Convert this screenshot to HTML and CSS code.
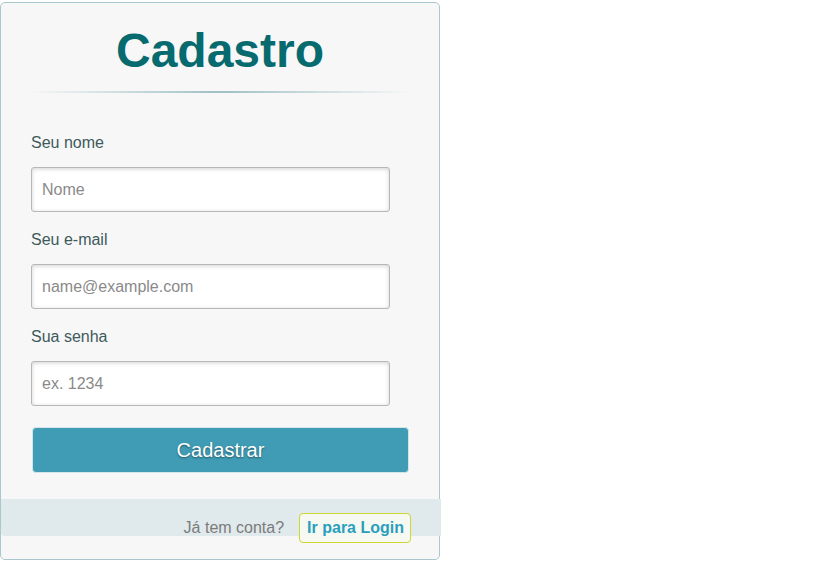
FILE: index.html
```html
<!DOCTYPE html>
<html lang="pt">
<head>
<meta charset="utf-8">
<title>Cadastro</title>
<link rel="stylesheet" href="styles.css">
</head>
<body>
<div class="card">
  <h1 class="title">Cadastro</h1>
  <div class="divider"></div>
  <form class="form">
    <label class="label" for="nome">Seu nome</label>
    <input class="field" id="nome" type="text" placeholder="Nome">
    <label class="label" for="email">Seu e-mail</label>
    <input class="field" id="email" type="email" placeholder="name@example.com">
    <label class="label" for="senha">Sua senha</label>
    <input class="field" id="senha" type="password" placeholder="ex. 1234">
    <button class="submit" type="button">Cadastrar</button>
  </form>
  <div class="footer">
    <span class="footer-text">Já tem conta?</span>
    <a class="login-link" href="#">Ir para Login</a>
  </div>
</div>
</body>
</html>
```

FILE: styles.css
```css
html, body {
  margin: 0;
  padding: 0;
  background: #ffffff;
}

body {
  font-family: "Liberation Sans", Arial, sans-serif;
}

.card {
  margin-top: 2px;
  width: 440px;
  height: 558px;
  box-sizing: border-box;
  border: 1px solid #aac7cd;
  border-radius: 5px;
  background: #f7f7f7;
  display: flex;
  flex-direction: column;
}

.title {
  margin: 0;
  padding-top: 20px;
  font-size: 48px;
  line-height: 56px;
  font-weight: bold;
  text-align: center;
  color: #066a6f;
}

.divider {
  margin: 12px 29px 0 29px;
  height: 2px;
  background: linear-gradient(to right, rgba(159,192,198,0), #9fc0c6 50%, rgba(159,192,198,0));
}

.form {
  display: flex;
  flex-direction: column;
  align-items: flex-start;
  padding: 0 30px;
}

.label {
  margin-top: 19px;
  font-size: 16px;
  line-height: 18px;
  color: #3e5a5c;
}

.label:first-child {
  margin-top: 41px;
}

.field {
  margin-top: 15px;
  width: 359px;
  height: 45px;
  box-sizing: border-box;
  border: 1px solid #b7b7b7;
  border-radius: 3px;
  padding: 0 10px;
  font-family: "Liberation Sans", Arial, sans-serif;
  font-size: 16px;
  color: #333;
  background: #ffffff;
  box-shadow: inset 0 1px 4px rgba(0, 0, 0, 0.18);
  outline: none;
}

.field::placeholder {
  color: #8a8a8a;
}

.submit {
  margin-top: 21px;
  margin-left: 1px;
  width: 377px;
  height: 46px;
  border: 1px solid #d3e5ea;
  border-radius: 4px;
  background: #3f9cb4;
  color: #ffffff;
  font-family: "Liberation Sans", Arial, sans-serif;
  font-size: 20px;
  text-shadow: 0 1px 2px rgba(0, 0, 0, 0.45);
  cursor: pointer;
}

.footer {
  margin-top: 26px;
  width: 440px;
  height: 37px;
  box-sizing: border-box;
  flex-shrink: 0;
  background: #e0e9eb;
  border-radius: 0 0 0 4px;
  display: flex;
  justify-content: flex-end;
  align-items: baseline;
  gap: 15px;
  padding: 14px 30px 0 0;
}

.footer-text {
  font-size: 16px;
  line-height: 18px;
  color: #7b7b7b;
}

.login-link {
  font-size: 16px;
  line-height: 18px;
  font-weight: bold;
  color: #2a9fbd;
  text-decoration: none;
  padding: 5px 6px 5px 7px;
  border: 1px solid #cfd630;
  border-radius: 4px;
  background: #f6f8f2;
}
```
